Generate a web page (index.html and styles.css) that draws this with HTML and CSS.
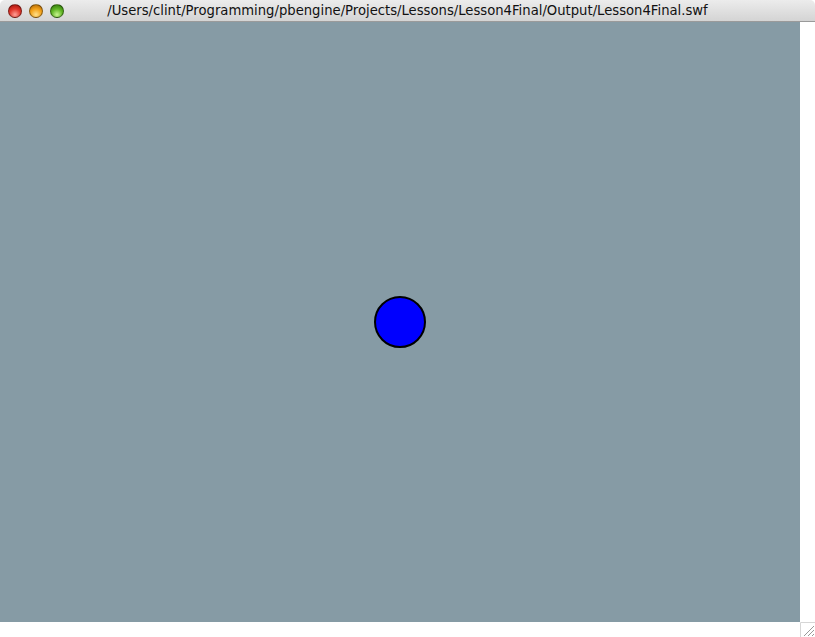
FILE: index.html
```html
<!DOCTYPE html>
<html>
<head>
<meta charset="utf-8">
<link rel="stylesheet" href="styles.css">
</head>
<body>
<div class="window">
  <div class="titlebar">
    <div class="lights">
      <span class="light red"></span>
      <span class="light yellow"></span>
      <span class="light green"></span>
    </div>
    <div class="title">/Users/clint/Programming/pbengine/Projects/Lessons/Lesson4Final/Output/Lesson4Final.swf</div>
  </div>
  <div class="body">
    <div class="stage">
      <div class="ball"></div>
    </div>
    <div class="bottom">
      <svg class="grip" width="15" height="15" viewBox="0 0 15 15">
        <path d="M0.5 15 V0.5 H15" stroke="#d6d6d6" stroke-width="1" fill="none"/>
        <path d="M4 14 L14 4 M8 14 L14 8 M12 14 L14 12" stroke="#999" stroke-width="1" fill="none"/>
      </svg>
    </div>
  </div>
</div>
</body>
</html>
```
FILE: styles.css
```css
html, body {
  margin: 0;
  padding: 0;
  background: #ffffff;
}
.window {
  width: 815px;
  height: 637px;
  display: flex;
  flex-direction: column;
  overflow: hidden;
}
.titlebar {
  height: 22px;
  flex: none;
  position: relative;
  border-radius: 5px 5px 0 0;
  background: linear-gradient(#ececec, #d4d4d4);
  border-bottom: 1px solid #9a9a9a;
  box-sizing: border-box;
  display: flex;
  align-items: center;
}
.lights {
  position: absolute;
  left: 8px;
  top: 4px;
  display: flex;
  gap: 7px;
}
.light {
  width: 14px;
  height: 14px;
  border-radius: 50%;
  box-sizing: border-box;
  border: 1px solid rgba(0,0,0,0.4);
}
.red {
  background: radial-gradient(circle at 50% 80%, #ff9f96 0%, #e0362b 50%, #9c0f08 100%);
}
.yellow {
  background: radial-gradient(circle at 50% 80%, #ffe08a 0%, #f3a21a 50%, #a86000 100%);
}
.green {
  background: radial-gradient(circle at 50% 80%, #c8f58f 0%, #5fb524 50%, #2a6e06 100%);
}
.title {
  flex: 1;
  text-align: center;
  font-family: "DejaVu Sans", "Liberation Sans", sans-serif;
  font-size: 13.2px;
  color: #111;
}
.body {
  flex: 1;
  display: flex;
  flex-direction: column;
}
.stage {
  width: 800px;
  height: 600px;
  background: #869ba5;
  display: flex;
  align-items: center;
  justify-content: center;
}
.ball {
  width: 48px;
  height: 48px;
  border-radius: 50%;
  background: #0000ff;
  border: 2px solid #000;
}
.bottom {
  flex: 1;
  display: flex;
  justify-content: flex-end;
  align-items: flex-end;
}
.grip {
  display: block;
}
```
